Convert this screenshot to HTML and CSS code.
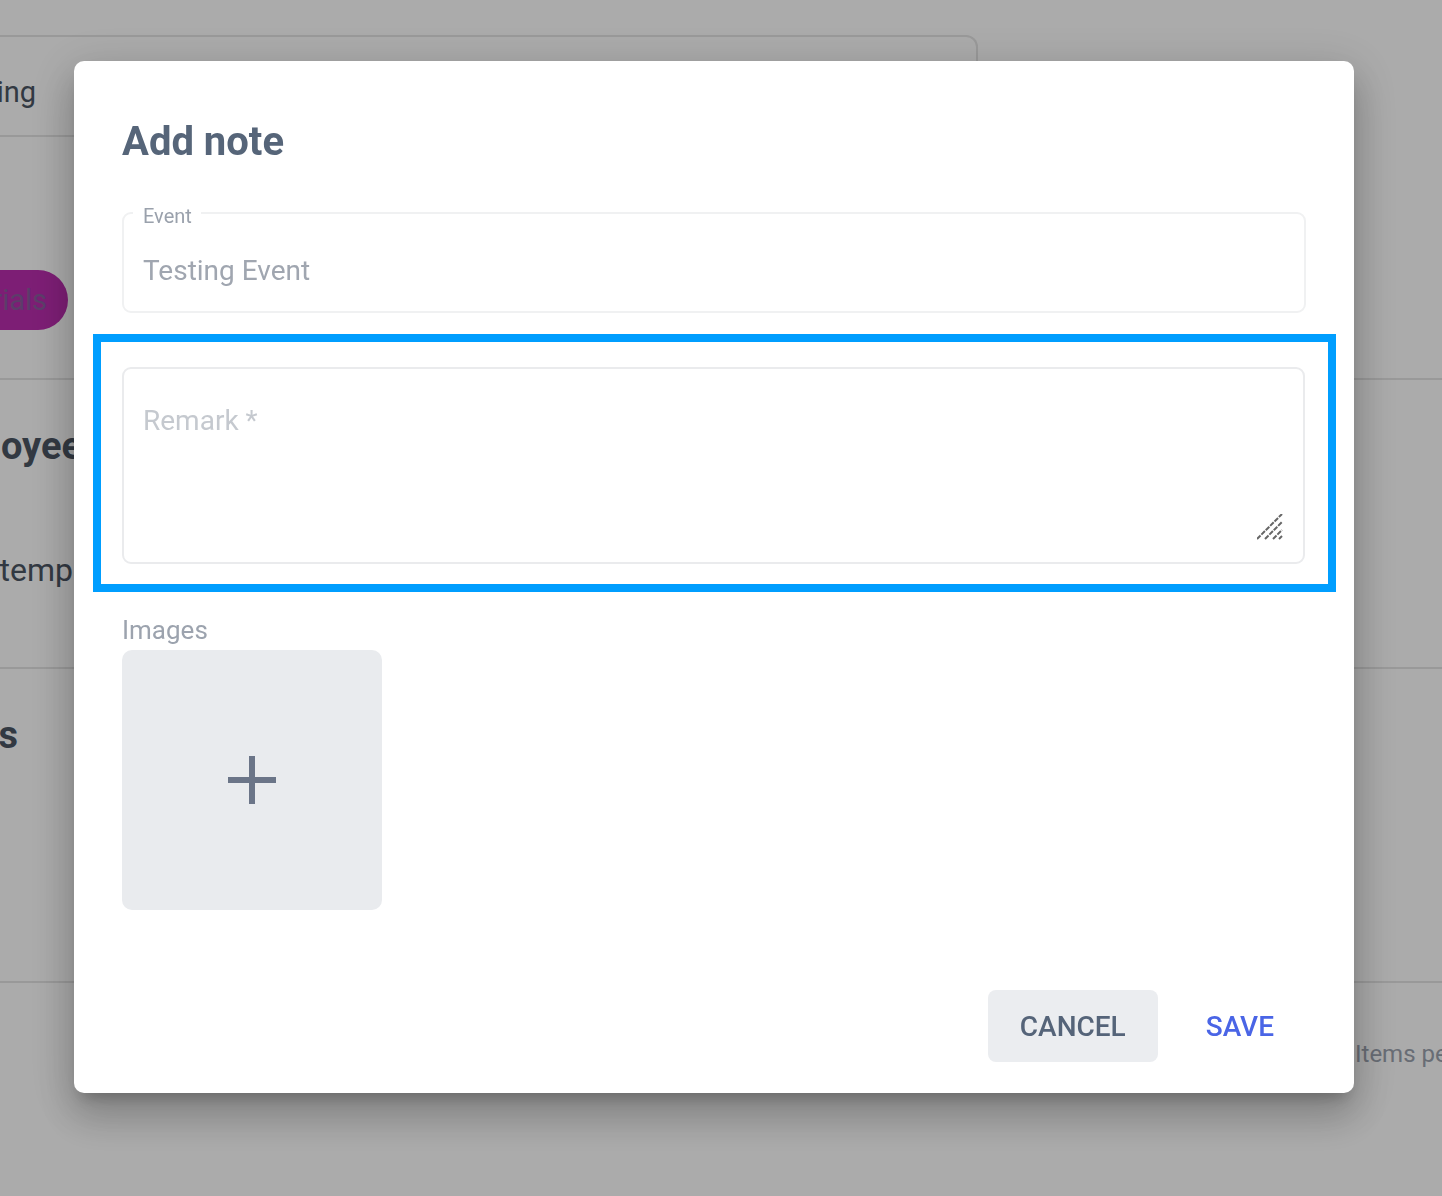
FILE: index.html
```html
<!DOCTYPE html>
<html lang="en">
<head>
  <meta charset="UTF-8" />
  <meta name="viewport" content="width=device-width, initial-scale=1.0"/>
  <title>Add note</title>
  <link rel="stylesheet" href="styles.css">
</head>
<body>

  <!-- Page behind the dialog -->
  <div class="page">
    <div class="card">
      <div class="clip clip-ing"><span class="bg-text">Training</span></div>
    </div>

    <div class="row row-tabs">
      <div class="clip clip-pill"><span class="pill">Materials</span></div>
    </div>

    <div class="row row-employee">
      <div class="clip clip-employee"><span class="bg-heading">Employee</span></div>
      <div class="clip clip-temp"><span class="bg-text bg-text-lg">Item temp</span></div>
    </div>

    <div class="row row-notes">
      <div class="clip clip-s"><span class="bg-heading">Notes</span></div>
    </div>

    <div class="row-footer">
      <span class="bg-small">Items per page</span>
    </div>
  </div>

  <!-- Dialog -->
  <div class="overlay">
    <div class="modal">
      <h2 class="modal-title">Add note</h2>

      <fieldset class="field">
        <legend>Event</legend>
        <input class="field-input" type="text" value="Testing Event" readonly />
      </fieldset>

      <div class="highlight">
        <div class="textarea-wrap">
          <textarea class="remark" placeholder="Remark *"></textarea>
          <svg class="resize-handle" width="26" height="26" viewBox="0 0 26 26">
            <g stroke="#666" stroke-width="2" stroke-dasharray="5 1.2" fill="none">
              <line x1="0" y1="25" x2="25" y2="0" />
              <line x1="8" y1="25" x2="25" y2="8" />
              <line x1="16" y1="25" x2="25" y2="16" />
              <line x1="22" y1="25" x2="25" y2="22" />
            </g>
          </svg>
        </div>
      </div>

      <div class="images-label">Images</div>
      <button class="image-add" type="button">
        <svg width="48" height="48" viewBox="0 0 48 48">
          <path d="M24 0v48M0 24h48" stroke="#6b7588" stroke-width="6" fill="none" />
        </svg>
      </button>

      <div class="modal-actions">
        <button class="btn btn-cancel" type="button">CANCEL</button>
        <button class="btn btn-save" type="button">SAVE</button>
      </div>
    </div>
  </div>

</body>
</html>
```

FILE: styles.css
```css
body {
  margin: 0;
  font-family: Roboto, "Liberation Sans", Arial, sans-serif;
  background: #fff;
  overflow: hidden;
}

/* background page */
.page {
  padding-top: 35px;
  overflow: hidden;
}

.card {
  width: 978px;
  height: 102px;
  box-sizing: border-box;
  border: 2px solid #e5e5e5;
  border-left: none;
  border-top-right-radius: 12px;
  padding-top: 38px;
}

.row {
  border-bottom: 2px solid #e5e5e5;
  box-sizing: border-box;
}

.row-tabs {
  height: 243px;
  padding-top: 133px;
}

.row-employee {
  height: 289px;
  padding-top: 44px;
}

.row-notes {
  height: 314px;
  padding-top: 44px;
}

.row-footer {
  display: flex;
  padding: 57px 0 0 1355px;
  white-space: nowrap;
  overflow: hidden;
}

.clip {
  display: flex;
  justify-content: flex-end;
  overflow: hidden;
  white-space: nowrap;
}

.clip-ing { width: 36px; }
.clip-pill { width: 68px; }
.clip-employee { width: 82px; }
.clip-temp { width: 73px; margin-top: 84px; }
.clip-s { width: 18px; }

.bg-text {
  font-size: 29px;
  line-height: 34px;
  color: #4b5563;
}

.bg-text-lg {
  font-size: 32px;
  line-height: 36px;
}

.bg-heading {
  font-size: 38px;
  line-height: 44px;
  font-weight: 700;
  color: #4b5563;
}

.bg-small {
  font-size: 24px;
  color: #9ca3af;
}

.pill {
  display: inline-block;
  height: 60px;
  line-height: 60px;
  padding: 0 21px 0 24px;
  border-radius: 30px;
  background: #bb2daf;
  color: #8a5c9f;
  font-size: 29px;
}

/* dialog */
.overlay {
  position: fixed;
  inset: 0;
  background: rgba(0, 0, 0, 0.33);
  padding: 61px 0 0 74px;
}

.modal {
  width: 1280px;
  height: 1032px;
  box-sizing: border-box;
  background: #fff;
  border-radius: 10px;
  padding: 57px 48px 31px 48px;
  box-shadow: 0 11px 15px -7px rgba(0, 0, 0, 0.22),
              0 24px 38px 3px rgba(0, 0, 0, 0.16),
              0 9px 46px 8px rgba(0, 0, 0, 0.12);
}

.modal-title {
  margin: 0;
  font-size: 40px;
  line-height: 47px;
  font-weight: 700;
  color: #566579;
}

.field {
  margin: 33px 0 0;
  padding: 26px 19px 24px;
  border: 2px solid #f0f1f2;
  border-radius: 9px;
  min-width: 0;
}

.field legend {
  margin-left: -10px;
  padding: 6px 9px 0 10px;
  font-size: 20px;
  line-height: 24px;
  color: #9aa1ac;
}

.field-input {
  display: block;
  width: 100%;
  height: 33px;
  padding: 0;
  border: none;
  outline: none;
  font-family: inherit;
  font-size: 28px;
  line-height: 33px;
  color: #a0a6b0;
  background: transparent;
}

.highlight {
  margin: 21px -30px 0 -29px;
  border: 8px solid #009eff;
  padding: 25px 23px 20px 21px;
}

.textarea-wrap {
  position: relative;
}

.remark {
  display: block;
  width: 100%;
  height: 197px;
  box-sizing: border-box;
  margin: 0;
  padding: 35px 19px;
  border: 2px solid #eaebed;
  border-radius: 9px;
  resize: none;
  outline: none;
  font-family: inherit;
  font-size: 28px;
  line-height: 33px;
  color: #374151;
}

.remark::placeholder {
  color: #c5c9cf;
}

.resize-handle {
  position: absolute;
  right: 22px;
  bottom: 24px;
}

.images-label {
  margin-top: 23px;
  font-size: 26px;
  line-height: 30px;
  color: #9ca3ae;
}

.image-add {
  display: flex;
  align-items: center;
  justify-content: center;
  width: 260px;
  height: 260px;
  margin-top: 5px;
  padding: 0;
  border: none;
  border-radius: 10px;
  background: #e9ebee;
  cursor: pointer;
}

.modal-actions {
  display: flex;
  justify-content: flex-end;
  gap: 16px;
  margin-top: 80px;
}

.btn {
  height: 72px;
  padding: 0 32px;
  border: none;
  border-radius: 8px;
  background: transparent;
  font-family: inherit;
  font-size: 28px;
  font-weight: 500;
  cursor: pointer;
}

.btn-cancel {
  background: #ebedf0;
  color: #556479;
}

.btn-save {
  color: #4a65e6;
}
```
